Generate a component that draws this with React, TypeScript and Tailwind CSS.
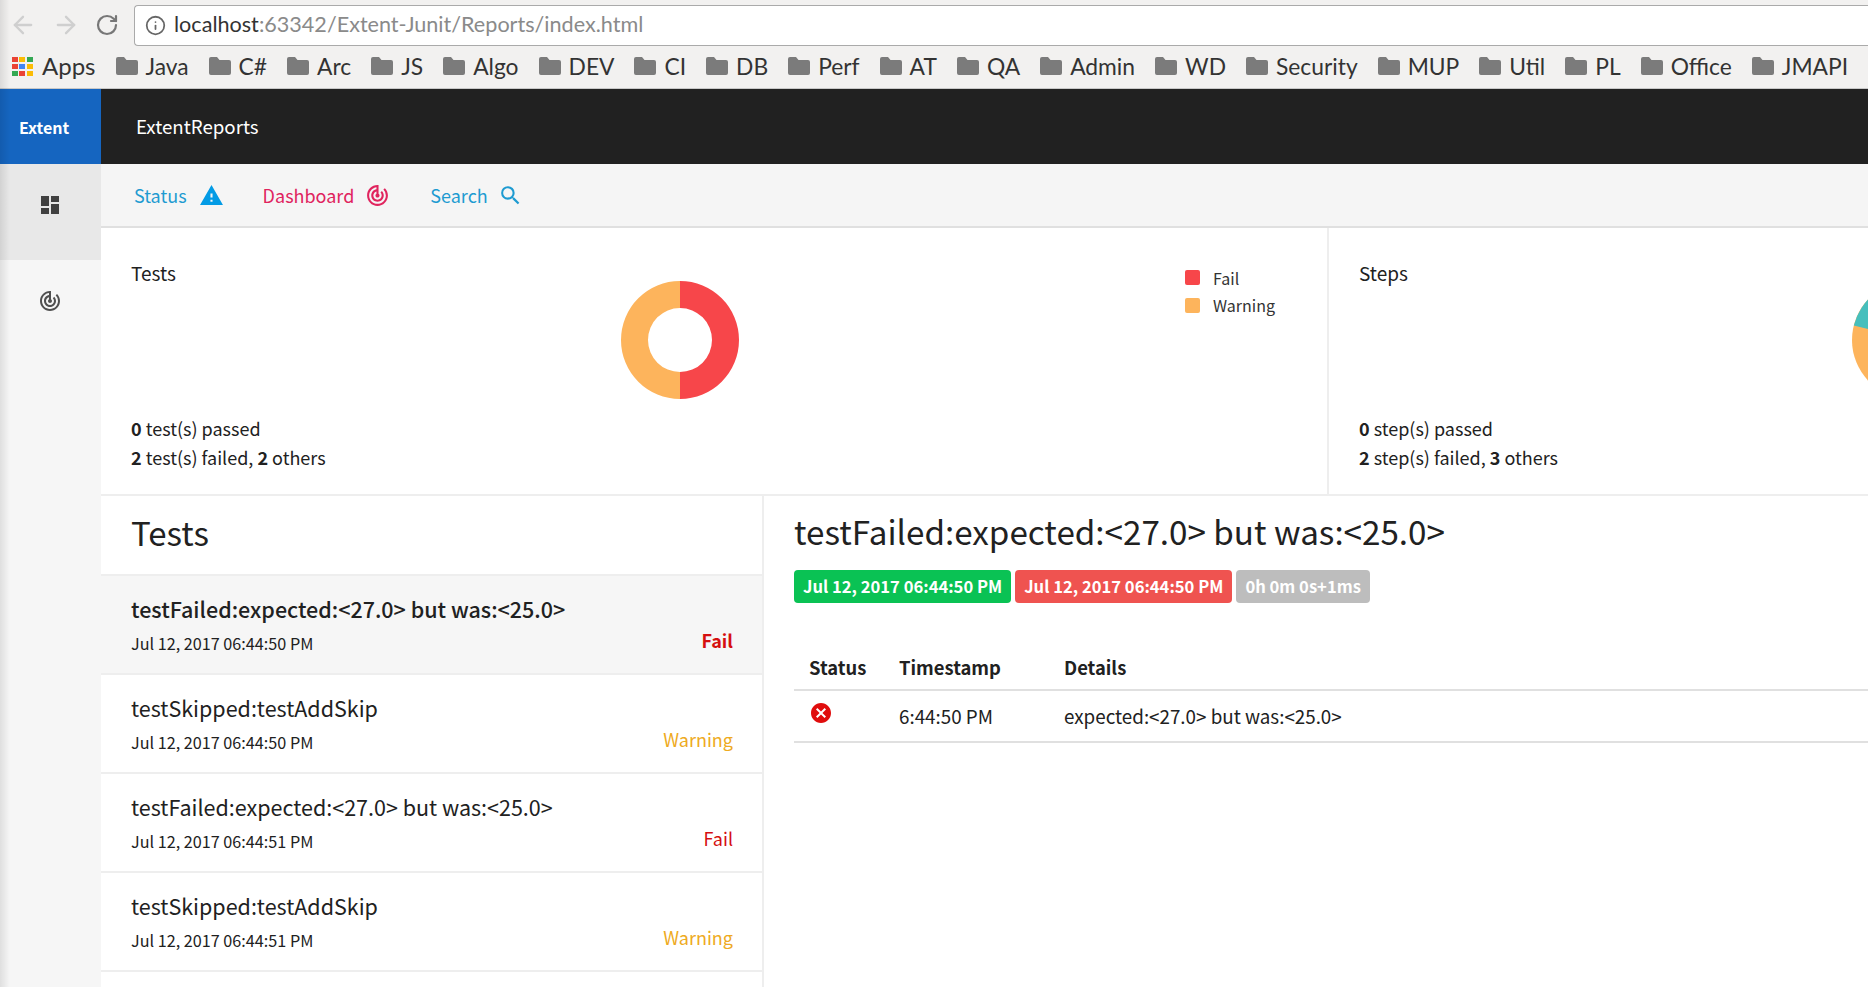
import { ArrowLeft, ArrowRight, RotateCw, Info } from "lucide-react";
import { MdDashboard, MdTrackChanges, MdWarning, MdSearch, MdCancel } from "react-icons/md";

const bookmarks = ["Java", "C#", "Arc", "JS", "Algo", "DEV", "CI", "DB", "Perf", "AT", "QA", "Admin", "WD", "Security", "MUP", "Util", "PL", "Office", "JMAPI"];

const tests = [
  { name: "testFailed:expected:<27.0> but was:<25.0>", time: "Jul 12, 2017 06:44:50 PM", status: "Fail", active: true },
  { name: "testSkipped:testAddSkip", time: "Jul 12, 2017 06:44:50 PM", status: "Warning", active: false },
  { name: "testFailed:expected:<27.0> but was:<25.0>", time: "Jul 12, 2017 06:44:51 PM", status: "Fail", active: false },
  { name: "testSkipped:testAddSkip", time: "Jul 12, 2017 06:44:51 PM", status: "Warning", active: false },
];

function FolderIcon() {
  return (
    <svg width="22" height="18" viewBox="0 0 22 18" className="shrink-0">
      <path d="M2 0h6l2.5 3H20a2 2 0 0 1 2 2v11a2 2 0 0 1-2 2H2a2 2 0 0 1-2-2V2a2 2 0 0 1 2-2z" fill="#7b7b7b" />
    </svg>
  );
}

function AppsIcon() {
  const colors = ["#ea4335", "#fbbc05", "#34a853", "#ea4335", "#4285f4", "#fbbc05", "#34a853", "#ea4335", "#fbbc05"];
  return (
    <div className="grid grid-cols-3 gap-[2px] w-[20px] shrink-0">
      {colors.map((c, i) => (
        <svg key={i} width="6" height="5" className="block"><rect width="6" height="5" fill={c} /></svg>
      ))}
    </div>
  );
}

function BrowserChrome() {
  return (
    <div className="h-[89px] bg-[#f2f1f0] border-b border-[#c8c8c8] font-['Lato',sans-serif] text-[#333]">
      <div className="flex items-center h-[49px] pt-[1px]">
        <ArrowLeft className="w-[28px] h-[28px] ml-[9px] text-[#cfcfcf]" strokeWidth={2} />
        <ArrowRight className="w-[28px] h-[28px] ml-[15px] text-[#cfcfcf]" strokeWidth={2} />
        <RotateCw className="w-[24px] h-[24px] ml-[15px] text-[#777]" strokeWidth={2.2} />
        <div className="ml-[15px] flex-1 h-[41px] bg-white border border-[#aaa] border-r-0 rounded-l-[4px] flex items-center">
          <Info className="w-[21px] h-[21px] ml-[10px] text-[#666]" strokeWidth={2} />
          <div className="ml-[8px] text-[21.6px] leading-none">
            localhost<span className="text-[#8a8a8a]">:63342/Extent-Junit/Reports/index.html</span>
          </div>
        </div>
      </div>
      <div className="flex items-center h-[34px] pl-[12px]">
        <AppsIcon />
        <span className="ml-[10px] text-[24px] leading-none">Apps</span>
        {bookmarks.map((b) => (
          <div key={b} className="flex items-center ml-[20px]">
            <FolderIcon />
            <span className="ml-[8px] text-[22.8px] leading-none">{b}</span>
          </div>
        ))}
      </div>
    </div>
  );
}

function Legend({ color, label }: { color: string; label: string }) {
  return (
    <div className="flex items-center gap-[13px] h-[27.5px]">
      <div className={`w-[15px] h-[15px] rounded-[2px] ${color}`} />
      <span className="text-[16px] text-[#333]">{label}</span>
    </div>
  );
}

function Donut() {
  return (
    <svg width="118" height="118" viewBox="0 0 118 118">
      <path d="M59 0A59 59 0 0 1 59 118V91A32 32 0 0 0 59 27z" fill="#F7464A" />
      <path d="M59 0A59 59 0 0 0 59 118V91A32 32 0 0 1 59 27z" fill="#FDB45C" />
    </svg>
  );
}

function StepsPie() {
  return (
    <svg width="118" height="118" viewBox="0 0 118 118">
      <circle cx="59" cy="59" r="59" fill="#FDB45C" />
      <path d="M59 59L1.8 44.5A59 59 0 0 1 59 0z" fill="#46BFBD" />
    </svg>
  );
}

function SummaryCard({ title, chart, legend, line1, line2 }: { title: string; chart: React.ReactNode; legend?: React.ReactNode; line1: React.ReactNode; line2: React.ReactNode }) {
  return (
    <div className="relative w-[1228px] shrink-0 h-[266px] pl-[30px] border-r-2 border-[#eeeeee]">
      <div className="text-[19px] leading-[28px] pt-[31px] text-[#212121]">{title}</div>
      {chart}
      {legend}
      <div className="absolute top-[186px] text-[18px] leading-[29px] text-[#212121]">
        <div>{line1}</div>
        <div>{line2}</div>
      </div>
    </div>
  );
}

export default function App() {
  return (
    <div className="relative w-[1868px] h-[987px] overflow-hidden bg-white font-['Noto_Sans_CJK_SC',sans-serif]">
      <BrowserChrome />

      <div className="flex h-[75px] bg-[#212121] text-white">
        <div className="w-[101px] bg-[#1565c0] flex items-center pl-[19px] pt-[1px] text-[16px] font-semibold">Extent</div>
        <div className="pl-[35px] flex items-center text-[18.7px]">ExtentReports</div>
      </div>

      <div className="flex h-[823px]">
        <div className="w-[101px] shrink-0 bg-[#f6f6f6]">
          <div className="h-[96px] bg-[#e8e8e8] flex items-center justify-center pb-[15px] pr-[2px]">
            <MdDashboard className="w-[24px] h-[24px] text-[#404040]" />
          </div>
          <div className="h-[81px] flex items-center justify-center pr-[2px]">
            <MdTrackChanges className="w-[24px] h-[24px] text-[#505050]" />
          </div>
        </div>

        <div className="flex-1 min-w-0">
          <div className="h-[64px] bg-[#f5f5f5] border-b-2 border-[#e0e0e0] flex items-center pl-[33px] text-[18px]">
            <span className="text-[#1e9bd1]">Status</span>
            <MdWarning className="w-[25px] h-[25px] ml-[12px] text-[#039be5]" />
            <span className="ml-[39px] text-[#e0245e]">Dashboard</span>
            <MdTrackChanges className="w-[25px] h-[25px] ml-[11px] text-[#e0245e]" />
            <span className="ml-[40px] text-[#1e9bd1]">Search</span>
            <MdSearch className="w-[25px] h-[25px] ml-[10px] text-[#1e9bd1]" />
          </div>

          <div className="flex h-[268px] border-b-2 border-[#eeeeee] overflow-hidden">
            <SummaryCard
              title="Tests"
              chart={<div className="absolute top-[53px] left-[520px]"><Donut /></div>}
              legend={
                <div className="absolute top-[36px] left-[1084px]">
                  <Legend color="bg-[#f7464a]" label="Fail" />
                  <Legend color="bg-[#fdb45c]" label="Warning" />
                </div>
              }
              line1={<><b className="font-semibold">0</b> test(s) passed</>}
              line2={<><b className="font-semibold">2</b> test(s) failed, <b className="font-semibold">2</b> others</>}
            />
            <SummaryCard
              title="Steps"
              chart={<div className="absolute top-[53px] left-[523px]"><StepsPie /></div>}
              line1={<><b className="font-semibold">0</b> step(s) passed</>}
              line2={<><b className="font-semibold">2</b> step(s) failed, <b className="font-semibold">3</b> others</>}
            />
          </div>

          <div className="flex">
            <div className="w-[663px] shrink-0 border-r-2 border-[#eeeeee] h-[491px]">
              <div className="h-[80px] pl-[30px] pb-[4px] flex items-center text-[33px] text-[#212121] border-b-2 border-[#eeeeee]">Tests</div>
              {tests.map((t, i) => (
                <div key={i} className={`h-[99px] pl-[30px] pr-[30px] border-b-2 border-[#eeeeee] relative ${t.active ? "bg-[#f6f6f6]" : ""}`}>
                  <div className={`pt-[17px] text-[21.5px] leading-[32px] text-[#212121] ${t.active ? "font-medium" : ""}`}>{t.name}</div>
                  <div className="mt-[6px] text-[16.2px] leading-[24px] text-[#212121]">{t.time}</div>
                  <div className={`absolute right-[29px] top-[50px] text-[18px] leading-[28px] ${t.status === "Fail" ? "text-[#d50f0f]" : "text-[#eeaa22]"} ${t.active ? "font-semibold" : ""}`}>{t.status}</div>
                </div>
              ))}
            </div>

            <div className="flex-1 pl-[30px]">
              <div className="h-[70px] mb-[4px] flex items-center text-[33.2px] text-[#212121]">testFailed:expected:&lt;27.0&gt; but was:&lt;25.0&gt;</div>
              <div className="flex gap-[4px]">
                <span className="h-[33px] px-[9px] flex items-center rounded-[4px] bg-[#0ac254] text-white text-[16.6px] font-semibold">Jul 12, 2017 06:44:50 PM</span>
                <span className="h-[33px] px-[9px] flex items-center rounded-[4px] bg-[#ef5350] text-white text-[16.6px] font-semibold">Jul 12, 2017 06:44:50 PM</span>
                <span className="h-[33px] px-[9px] flex items-center rounded-[4px] bg-[#bdbdbd] text-white text-[16.6px] font-semibold">0h 0m 0s+1ms</span>
              </div>
              <div className="mt-[47px] text-[18.8px] text-[#212121]">
                <div className="flex h-[41px] items-center border-b-2 border-[#e0e0e0] font-semibold pl-[15px] pb-[4px] text-[18.4px]">
                  <span className="w-[90px]">Status</span>
                  <span className="w-[165px]">Timestamp</span>
                  <span>Details</span>
                </div>
                <div className="flex h-[52px] items-center border-b-2 border-[#e0e0e0] pl-[15px]">
                  <span className="w-[90px]"><MdCancel className="w-[24px] h-[24px] text-[#e00d0d] -mt-[7px]" /></span>
                  <span className="w-[165px]">6:44:50 PM</span>
                  <span>expected:&lt;27.0&gt; but was:&lt;25.0&gt;</span>
                </div>
              </div>
            </div>
          </div>
        </div>
      </div>

      {/* edge shadow from the window behind */}
      <div className="absolute left-0 top-0 w-[10px] h-full bg-gradient-to-r from-[#00000018] to-transparent pointer-events-none" />
    </div>
  );
}
